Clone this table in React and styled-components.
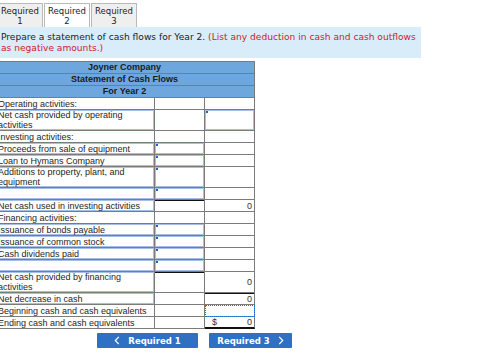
import React from "react";
import styled, { createGlobalStyle } from "styled-components";

const Global = createGlobalStyle`
  html, body { margin: 0; padding: 0; background: #fff; }
  body { overflow: hidden; }
`;

const Page = styled.div`
  margin-left: -4px;
  padding-top: 3px;
  font-family: "DejaVu Sans", Verdana, sans-serif;
  color: #222;
`;

const Tabs = styled.div`
  display: flex;
  gap: 1px;
  align-items: flex-end;
  margin-left: 1px;
`;

const Tab = styled.div`
  width: 46px;
  height: 24px;
  box-sizing: border-box;
  border: 1px solid #b9b9b9;
  border-bottom: none;
  background: ${(p) => (p.$active ? "#fff" : "#efefef")};
  font-size: 8.5px;
  line-height: 10px;
  text-align: center;
  padding-top: 2px;
  color: #222;
`;

const Prompt = styled.div`
  width: 425px;
  box-sizing: border-box;
  background: #d9ecf9;
  padding: 5px 0 4px 5px;
  font-size: 9.1px;
  line-height: 11px;
  color: #222;
`;

const Warn = styled.span`
  color: #cc2229;
`;

const Sheet = styled.div`
  margin: 3px 0 0 -2px;
  display: grid;
  grid-template-columns: 160px 50px 50px;
  width: fit-content;
  border-left: 1px solid #7b7b7b;
  border-top: 1px solid #7b7b7b;
  font-family: "Liberation Sans", Arial, sans-serif;
  font-size: 9px;
  color: #1e1e1e;
`;

const Title = styled.div`
  grid-column: 1 / -1;
  height: 11px;
  line-height: 11px;
  background: #6ea7de;
  font-weight: bold;
  text-align: center;
  border-right: 1px solid #7b7b7b;
  border-bottom: 1px solid #7b7b7b;
  color: #1a1a1a;
`;

const Cell = styled.div`
  position: relative;
  min-height: 11px;
  border-right: 1px solid #7b7b7b;
  border-bottom: 1px solid #7b7b7b;
  display: flex;
  align-items: center;
  box-sizing: content-box;
`;

const Label = styled(Cell)`
  padding-left: 3px;
  line-height: 10px;
  box-shadow: ${(p) => (p.$field ? "inset 0 0 0 1px #a6c0e4" : "none")};
`;

const Amount = styled(Cell)`
  justify-content: ${(p) => (p.$dollar ? "space-between" : "flex-end")};
  padding: 0 2px 0 7px;
  color: #333;
  box-shadow: ${(p) =>
    p.$field
      ? "inset 0 0 0 1px #a6c0e4"
      : p.$rule
      ? "inset 0 1px 0 #111"
      : "none"};
  ${(p) => p.$focus && "outline: 1px dotted #1d6fd0; outline-offset: -1px;"}
  ${(p) => p.$total && "border-bottom: 2px solid #111; min-height: 10px;"}
`;

const Marker = styled.span`
  position: absolute;
  left: 1px;
  top: 1px;
  width: 2px;
  height: 2px;
  background: #2d62b8;
`;

const Actions = styled.div`
  display: flex;
  gap: 11px;
  margin: 4px 0 0 101px;
`;

const NavButton = styled.div`
  height: 15px;
  width: ${(p) => p.$w}px;
  box-sizing: border-box;
  background: #2f70c2;
  color: #fff;
  font-size: 8.5px;
  font-weight: bold;
  display: flex;
  align-items: center;
  justify-content: center;
  gap: 8px;
  border-radius: 1px;
`;

const Chevron = ({ dir }) => (
  <svg width="6" height="9" viewBox="0 0 6 9">
    <path
      d={dir === "left" ? "M4.8 0.8 L1.3 4.5 L4.8 8.2" : "M1.2 0.8 L4.7 4.5 L1.2 8.2"}
      fill="none"
      stroke="#fff"
      strokeWidth="1.2"
    />
  </svg>
);

const rows = [
  { label: "Operating activities:" },
  { label: "Net cash provided by operating activities", labelField: true, c3: { field: true, marker: true } },
  { label: "Investing activities:" },
  { label: "Proceeds from sale of equipment", labelField: true, c2: { field: true, marker: true } },
  { label: "Loan to Hymans Company", labelField: true, c2: { field: true, marker: true } },
  { label: "Additions to property, plant, and equipment", labelField: true, c2: { field: true, marker: true } },
  { label: "", labelField: true, c2: { field: true, marker: true } },
  { label: "Net cash used in investing activities", labelField: true, c2: { rule: true }, c3: { value: "0" } },
  { label: "Financing activities:" },
  { label: "Issuance of bonds payable", labelField: true, c2: { field: true, marker: true } },
  { label: "Issuance of common stock", labelField: true, c2: { field: true, marker: true } },
  { label: "Cash dividends paid", labelField: true, c2: { field: true, marker: true } },
  { label: "", labelField: true, c2: { field: true, marker: true } },
  { label: "Net cash provided by financing activities", labelField: true, c2: { rule: true }, c3: { value: "0" } },
  { label: "Net decrease in cash", labelField: true, c3: { value: "0", rule: true } },
  { label: "Beginning cash and cash equivalents", c3: { focus: true } },
  { label: "Ending cash and cash equivalents", c3: { value: "0", dollar: true, total: true } },
];

const AmountCell = ({ spec = {} }) => (
  <Amount
    $field={spec.field}
    $rule={spec.rule}
    $focus={spec.focus}
    $total={spec.total}
    $dollar={spec.dollar}
  >
    {spec.marker && <Marker />}
    {spec.dollar && <span>$</span>}
    {spec.value && <span>{spec.value}</span>}
  </Amount>
);

export default function App() {
  return (
    <>
      <Global />
      <Page>
        <Tabs>
          <Tab>Required<br />1</Tab>
          <Tab $active>Required<br />2</Tab>
          <Tab>Required<br />3</Tab>
        </Tabs>
        <Prompt>
          Prepare a statement of cash flows for Year 2.{" "}
          <Warn>(List any deduction in cash and cash outflows as negative amounts.)</Warn>
        </Prompt>
        <Sheet>
          <Title>Joyner Company</Title>
          <Title>Statement of Cash Flows</Title>
          <Title>For Year 2</Title>
          {rows.map((r, i) => (
            <React.Fragment key={i}>
              <Label $field={r.labelField}>{r.label}</Label>
              <AmountCell spec={r.c2} />
              <AmountCell spec={r.c3} />
            </React.Fragment>
          ))}
        </Sheet>
        <Actions>
          <NavButton $w={101}>
            <Chevron dir="left" />
            Required 1
          </NavButton>
          <NavButton $w={83}>
            Required 3
            <Chevron dir="right" />
          </NavButton>
        </Actions>
      </Page>
    </>
  );
}
